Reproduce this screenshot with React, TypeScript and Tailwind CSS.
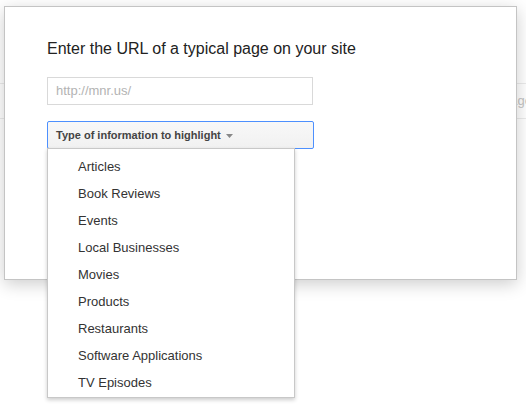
import React from "react";

const TYPES = [
  "Articles",
  "Book Reviews",
  "Events",
  "Local Businesses",
  "Movies",
  "Products",
  "Restaurants",
  "Software Applications",
  "TV Episodes",
];

export default function App() {
  return (
    <div
      className="relative w-[526px] h-[407px] overflow-hidden bg-white"
      style={{ fontFamily: '"Liberation Sans", Arial, sans-serif' }}
    >
      {/* page behind the dialog */}
      <div className="pt-[83px]">
        <div className="h-[36px] border-y border-[#ebebeb] flex items-center justify-end">
          <span className="text-[13px] text-[#c4c4c4] mr-[-6px]">page</span>
        </div>
      </div>

      {/* dialog */}
      <div className="absolute left-[4px] top-[6px] w-[513px] h-[274px] bg-white border border-[#c4c4c4] shadow-[0_4px_16px_rgba(0,0,0,0.2)] pl-[42px] pt-[33px]">
        <h1 className="text-[16px] leading-[18px] text-[#222]">Enter the URL of a typical page on your site</h1>

        <div className="mt-[19px] w-[266px] h-[28px] border border-[#d9d9d9] flex items-center pl-[8px]">
          <span className="text-[13px] text-[#b3b3b3]">http://mnr.us/</span>
        </div>

        <div className="relative mt-[16px] w-[267px]">
          <button className="w-full h-[28px] border border-[#4d90fe] rounded-[2px] bg-gradient-to-b from-[#f8f8f8] to-[#f1f1f1] flex items-center pl-[8px] text-left">
            <span className="text-[11px] font-bold text-[#444]">Type of information to highlight</span>
            <svg width="7" height="4" viewBox="0 0 7 4" className="ml-[5px] mt-[1px]">
              <path d="M0 0 L7 0 L3.5 4 Z" fill="#888" />
            </svg>
          </button>

          <div className="absolute left-0 top-[27px] w-[248px] bg-white border border-[#c8c8c8] shadow-[0_2px_4px_rgba(0,0,0,0.2)] pt-[4px] pb-[1px] z-10">
            {TYPES.map((t) => (
              <div key={t} className="pl-[30px] py-[6px] text-[13px] leading-[15px] text-[#333]">
                {t}
              </div>
            ))}
          </div>
        </div>
      </div>
    </div>
  );
}
